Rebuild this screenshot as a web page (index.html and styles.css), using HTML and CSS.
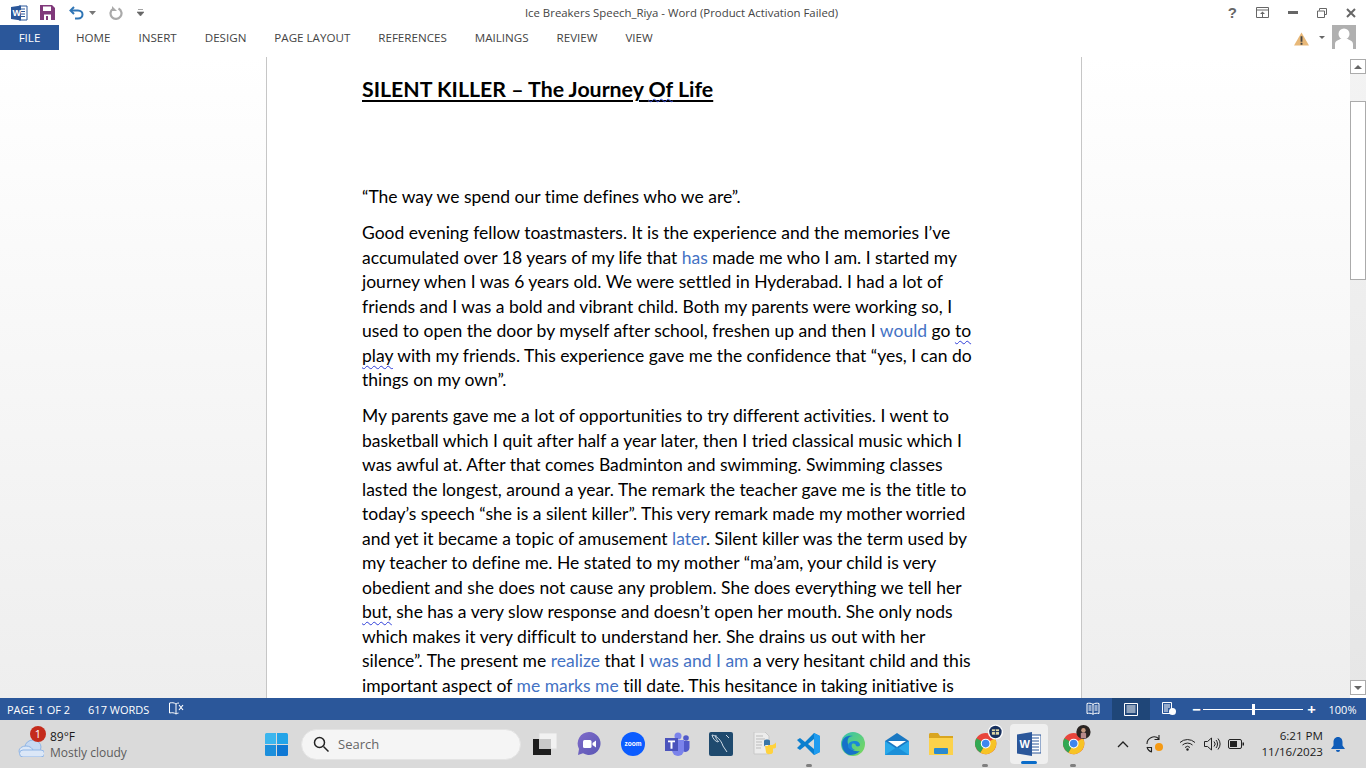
FILE: index.html
```html
<!DOCTYPE html>
<html lang="en">
<head>
  <meta charset="UTF-8" />
  <title>Ice Breakers Speech_Riya - Word</title>
  <link rel="stylesheet" href="styles.css">
</head>
<body>
  <header class="titlebar">
    <div class="qat">
      <svg class="word-mini" width="18" height="16" viewBox="0 0 18 16"><path d="M9 1h8v14H9z" fill="#fff" stroke="#2b579a"/><path d="M11 4h4M11 6.500h4M11 9h4M11 11.500h4" stroke="#2b579a"/><path d="M1 2l10-1.500v15L1 14z" fill="#2b579a"/><text x="2.500" y="11" class="word-w">W</text></svg>
      <svg class="save" width="15" height="15" viewBox="0 0 15 15"><path d="M0 0h12l3 3v12H0z" fill="#80397b"/><path d="M3 1.500h8v4.500H3z" fill="#fff"/><path d="M4 9.500h7V15H4z" fill="#fff"/><path d="M6 11h2v4H6z" fill="#80397b"/></svg>
      <svg class="undo" width="16" height="14" viewBox="0 0 16 14"><path d="M5 1L1.500 4.500 5 8" fill="none" stroke="#2f75b5" stroke-width="2"/><path d="M2 4.500h7c6 0 6 8 0 8H6" fill="none" stroke="#2f75b5" stroke-width="2"/></svg>
      <svg class="caret" width="7" height="4" viewBox="0 0 7 4"><path d="M0 0h7L3.500 4z" fill="#777"/></svg>
      <svg class="redo" width="14" height="14" viewBox="0 0 14 14"><path d="M9.500 2.500a5.500 5.500 0 1 1-5.500.3" fill="none" stroke="#aaa" stroke-width="2.200"/><path d="M3 0v5h5z" fill="#aaa"/></svg>
      <svg class="customize" width="7" height="8" viewBox="0 0 7 8"><path d="M1 .5h5M0 3h7L3.500 7z" fill="#666" stroke="#666" stroke-width=".6"/></svg>
    </div>
    <div class="doc-title">Ice Breakers Speech_Riya - Word (Product Activation Failed)</div>
    <div class="win-buttons">
      <span class="help">?</span>
      <svg width="13" height="11" viewBox="0 0 13 11"><path d="M.5.500h12v10H.5z" fill="none" stroke="#666"/><path d="M.5 3h12" stroke="#666"/><path d="M6.500 4.500L4 7h5zM6 7h1v3H6z" fill="#666"/></svg>
      <svg width="10" height="3" viewBox="0 0 10 3"><path d="M0 0h10v3H0z" fill="#666"/></svg>
      <svg width="10" height="10" viewBox="0 0 10 10"><path d="M2.500 2.500V.5h7v6h-2M.5 3h7v6.500h-7z" fill="none" stroke="#666"/></svg>
      <svg width="10" height="10" viewBox="0 0 10 10"><path d="M1 1l8 8M9 1L1 9" stroke="#666" stroke-width="2"/></svg>
    </div>
  </header>

  <nav class="ribbon">
    <a class="tab-file">FILE</a>
    <div class="tabs">
      <a class="tab">HOME</a>
      <a class="tab">INSERT</a>
      <a class="tab">DESIGN</a>
      <a class="tab">PAGE LAYOUT</a>
      <a class="tab">REFERENCES</a>
      <a class="tab">MAILINGS</a>
      <a class="tab">REVIEW</a>
      <a class="tab">VIEW</a>
    </div>
    <div class="account">
      <svg class="warn" width="15" height="14" viewBox="0 0 16 14"><path d="M8 0l8 14H0z" fill="#e8b878"/><path d="M7 4h2v6H7zM7 11h2v2H7z" fill="#444"/></svg>
      <svg class="acct-caret" width="6" height="3" viewBox="0 0 6 3"><path d="M0 0h6L3 3z" fill="#666"/></svg>
      <svg class="avatar" width="24" height="24" viewBox="0 0 24 24"><path d="M0 0h24v24H0z" fill="#b0b0b0"/><circle cx="12" cy="9" r="5.500" fill="#fff"/><path d="M3 24v-5c0-4 5-4 5-5h8c0 1 5 1 5 5v5z" fill="#fff"/></svg>
    </div>
  </nav>

  <main class="workspace">
    <div class="canvas">
      <article class="page">
        <h1 class="heading"><span class="heading-u">SILENT KILLER – The Journey <span class="squig-title">Of</span> Life</span></h1>
        <p class="para quote"><span class="line">“The way we spend our time defines who we are”.</span></p>
        <p class="para">
          <span class="line">Good evening fellow toastmasters. It is the experience and the memories I’ve</span>
          <span class="line">accumulated over 18 years of my life that <b class="edit">has</b> made me who I am. I started my</span>
          <span class="line">journey when I was 6 years old. We were settled in Hyderabad. I had a lot of</span>
          <span class="line">friends and I was a bold and vibrant child. Both my parents were working so, I</span>
          <span class="line">used to open the door by myself after school, freshen up and then I <b class="edit">would</b> go <span class="squig">to</span></span>
          <span class="line"><span class="squig">play</span> with my friends. This experience gave me the confidence that “yes, I can do</span>
          <span class="line">things on my own”.</span>
        </p>
        <p class="para">
          <span class="line">My parents gave me a lot of opportunities to try different activities. I went to</span>
          <span class="line">basketball which I quit after half a year later, then I tried classical music which I</span>
          <span class="line">was awful at. After that comes Badminton and swimming. Swimming classes</span>
          <span class="line">lasted the longest, around a year. The remark the teacher gave me is the title to</span>
          <span class="line">today’s speech “she is a silent killer”. This very remark made my mother worried</span>
          <span class="line">and yet it became a topic of amusement <b class="edit">later</b>. Silent killer was the term used by</span>
          <span class="line">my teacher to define me. He stated to my mother “ma’am, your child is very</span>
          <span class="line">obedient and she does not cause any problem. She does everything we tell her</span>
          <span class="line"><span class="squig">but,</span> she has a very slow response and doesn’t open her mouth. She only nods</span>
          <span class="line">which makes it very difficult to understand her. She drains us out with her</span>
          <span class="line">silence”. The present me <b class="edit">realize</b> that I <b class="edit">was and I am</b> a very hesitant child and this</span>
          <span class="line">important aspect of <b class="edit">me marks me</b> till date. This hesitance in taking initiative is</span>
        </p>
      </article>
    </div>
    <aside class="scrollbar">
      <div class="sb-btn"><svg width="8" height="4" viewBox="0 0 8 4"><path d="M4 0l4 4H0z" fill="#666"/></svg></div>
      <div class="sb-track"><div class="sb-thumb"></div></div>
      <div class="sb-btn"><svg width="8" height="4" viewBox="0 0 8 4"><path d="M0 0h8L4 4z" fill="#666"/></svg></div>
    </aside>
  </main>

  <footer class="statusbar">
    <span class="st-item st-page">PAGE 1 OF 2</span>
    <span class="st-item st-words">617 WORDS</span>
    <svg class="st-book" width="15" height="14" viewBox="0 0 15 14"><path d="M7 2C5 .5 3 .5 .5 1v10c2.500-.5 4.500-.5 6.500 1V2zM7 2c1-.8 2-1 3-1M7 12c1-.5 1.500-.8 2.500-.9" fill="none" stroke="#fff"/><path d="M10 3l4 5M14 3l-4 5" stroke="#fff" stroke-width="1.200"/></svg>
    <div class="st-right">
      <div class="view-btn">
        <svg width="14" height="14" viewBox="0 0 14 14"><path d="M1 1.500c2-.5 4-.5 6 .8 2-1.300 4-1.300 6-.8v10c-2-.5-4-.5-6 .8-2-1.300-4-1.300-6-.8z" fill="none" stroke="#fff"/><path d="M7 2v10M2.500 4h3M2.500 6h3M2.500 8h3M8.500 4h3M8.500 6h3M8.500 8h3" stroke="#fff"/></svg>
      </div>
      <div class="view-btn view-on">
        <svg width="14" height="13" viewBox="0 0 14 13"><path d="M.5.500h13v12H.5z" fill="none" stroke="#fff"/><path d="M2.500 3h9M2.500 5h9M2.500 7h9M2.500 9h9" stroke="#fff"/></svg>
      </div>
      <div class="view-btn">
        <svg width="15" height="14" viewBox="0 0 15 14"><path d="M.5.500h9v11H.5z" fill="none" stroke="#fff"/><path d="M2 3h6M2 5h6M2 7h4M2 9h4" stroke="#fff"/><circle cx="10.500" cy="9.500" r="3.500" fill="#fff"/></svg>
      </div>
      <div class="zoom">
        <span class="z-sign">−</span>
        <div class="z-track"><span class="z-knob"></span></div>
        <span class="z-sign">+</span>
      </div>
      <span class="z-pct">100%</span>
    </div>
  </footer>

  <div class="taskbar">
    <div class="weather">
      <div class="w-icon">
        <svg width="26" height="19" viewBox="0 0 26 19"><ellipse cx="15" cy="9" rx="8" ry="7" fill="#c6d9f2" stroke="#8fb5e6"/><ellipse cx="8" cy="13" rx="7" ry="5" fill="#dbe7f7" stroke="#8fb5e6"/><path d="M6 12h17a3.500 3.500 0 0 1 0 7H5a3.500 3.500 0 0 1 0-7z" fill="#dbe7f7" stroke="#8fb5e6"/></svg>
        <span class="badge">1</span>
      </div>
      <div class="w-text"><div class="w-temp">89°F</div><div class="w-desc">Mostly cloudy</div></div>
    </div>

    <div class="tb-center">
      <svg class="winlogo" width="23" height="23" viewBox="0 0 23 23"><path d="M0 1.500A1.500 1.500 0 0 1 1.500 0H11v11H0z" fill="#3cb6ee"/><path d="M12 0h9.500A1.500 1.500 0 0 1 23 1.500V11H12z" fill="#24a4e8"/><path d="M0 12h11v11H1.500A1.500 1.500 0 0 1 0 21.500z" fill="#1c8fdc"/><path d="M12 12h11v9.500a1.500 1.500 0 0 1-1.500 1.500H12z" fill="#0f78d4"/></svg>
      <div class="search">
        <svg width="16" height="16" viewBox="0 0 16 16"><circle cx="6.500" cy="6.500" r="5" fill="none" stroke="#222" stroke-width="1.500"/><path d="M10.500 10.500l5 5" stroke="#222" stroke-width="1.500"/></svg>
        <span>Search</span>
      </div>
      <div class="tb-icon"><svg width="24" height="22" viewBox="0 0 24 22"><path d="M6 0h18v16H6z" fill="#f2f2f2"/><path d="M6 0h18v16H6z" fill="none" stroke="#ddd"/><path d="M0 6h18v16H0z" fill="#1d1d1d"/><path d="M6 6h12v10H6z" fill="#c9c9c9"/></svg></div>
      <div class="tb-icon"><svg width="24" height="24" viewBox="0 0 24 24"><defs><linearGradient id="zc" x1="0" y1="0" x2="1" y2="1"><stop offset="0" stop-color="#7f6bc9"/><stop offset="1" stop-color="#5a57b5"/></linearGradient></defs><path d="M12 0a11.500 11.500 0 1 1-6 21.300L1 23l1-6A11.500 11.500 0 0 1 12 0z" fill="url(#zc)"/><rect x="6" y="8" width="8.500" height="8" rx="1.500" fill="#fff"/><path d="M15.500 11l3.500-2.500v7L15.500 13z" fill="#fff"/></svg></div>
      <div class="tb-icon"><svg width="24" height="24" viewBox="0 0 24 24"><circle cx="12" cy="12" r="12" fill="#0b5cff"/><text x="12" y="14" class="zoom-word">zoom</text></svg></div>
      <div class="tb-icon"><svg width="25" height="24" viewBox="0 0 25 24"><circle cx="13" cy="4" r="3.500" fill="#7b83eb"/><circle cx="21" cy="6" r="2.800" fill="#5059c9"/><path d="M18 9h6.500v7a4 4 0 0 1-6.500 3z" fill="#5059c9"/><path d="M7 8h12v10a6 6 0 0 1-12 0z" fill="#7b83eb"/><rect x="0" y="6" width="13" height="13" fill="#4b53bc"/><path d="M3 8.500h7v1.800H7.500v6.500h-2v-6.500H3z" fill="#fff"/></svg></div>
      <div class="tb-icon"><svg width="24" height="24" viewBox="0 0 24 24"><rect width="24" height="24" rx="2" fill="#1f4a6e"/><path d="M3 3c5 1 9 5 11 11l4 6M7 3c-1 3 1 5 3 7M3 3c1 4 3 6 6 7M17 3l3 3" fill="none" stroke="#cfdbe6" stroke-width="1"/></svg></div>
      <div class="tb-icon"><svg width="24" height="24" viewBox="0 0 24 24"><path d="M1 0h11l4 4v18H1z" fill="#ececec" stroke="#c8c8c8"/><path d="M3 4h7M3 7h9M3 10h6M3 13h6M3 16h5" stroke="#bbb"/><path d="M11 9c0-2 6-2 6 0v4h-4c-1 0-2 1-2 2z" fill="#3a76a8"/><path d="M23 15c0 2-6 2-6 0v-1h-2v-1h4c1 0 4-2 4-3z" fill="#ffd23e"/><path d="M12 14h8v6c0 3-7 3-7 0z" fill="#ffd23e"/></svg></div>
      <div class="tb-icon tb-run"><svg width="24" height="24" viewBox="0 0 24 24"><path d="M17 1l6 3v16l-6 3-9-9-5 4-3-2 4-4-4-4 3-2 5 4z" fill="#0a7fcf"/><path d="M17 1l6 3v16l-6 3z" fill="#1f9cf0"/><path d="M17 7l-6 5 6 5z" fill="#d9d9d9"/></svg></div>
      <div class="tb-icon"><svg width="24" height="24" viewBox="0 0 24 24"><defs><linearGradient id="eg" x1="0" y1="0" x2="1" y2="1"><stop offset="0" stop-color="#35c1b0"/><stop offset="1" stop-color="#7ed957"/></linearGradient></defs><circle cx="12" cy="12" r="12" fill="url(#eg)"/><path d="M1 12C1 5 7 3 12 4c-5 0-6 4-5 8 1 5 6 8 12 7-3 3-7 4-10 4-5-1-8-6-8-11z" fill="#1672c9"/><path d="M7 14c0-4 4-5 7-5s5 2 5 4c0 1-2 2-4 1 0-2-2-3-4-2-1 2 0 5 3 6-4 0-7-1-7-4z" fill="#1a86d8"/></svg></div>
      <div class="tb-icon"><svg width="24" height="22" viewBox="0 0 24 22"><path d="M0 8L12 0l12 8v14H0z" fill="#1a78c2"/><path d="M3 8h18l-9 6z" fill="#fff"/><path d="M0 8l12 8 12-8v14H0z" fill="#29a8ea"/><path d="M0 22l12-8 12 8z" fill="#1b8fd8"/></svg></div>
      <div class="tb-icon"><svg width="24" height="22" viewBox="0 0 24 22"><path d="M0 1.500C0 .7.700 0 1.500 0H9l2 3h13v3H0z" fill="#d9a520"/><path d="M0 5h24v17H0z" fill="#fcd24b"/><rect x="5" y="15" width="14" height="6" rx="1" fill="#2a8ad0"/></svg></div>
      <div class="tb-icon tb-run"><svg width="36" height="36" viewBox="0 0 36 36" class="chrome-svg"><circle cx="12" cy="22" r="12" fill="#e8453c"/><path d="M12 22L22.400 16A12 12 0 0 1 6 32.400z" fill="#f7c325"/><path d="M12 22L6 32.400A12 12 0 0 1 1.600 16z" fill="#33a853"/><circle cx="12" cy="22" r="5.500" fill="#fff"/><circle cx="12" cy="22" r="4.300" fill="#3f86ee"/><circle cx="23" cy="9" r="8.500" fill="#fff"/><circle cx="23" cy="9" r="7" fill="#17305e"/><rect x="19" y="6" width="8" height="6" fill="#e1d9a8"/><path d="M19 8.500h8M23 6v6" stroke="#17305e"/></svg></div>
      <div class="tb-icon tb-word">
        <svg width="24" height="24" viewBox="0 0 24 24"><path d="M14 3h10v18H14z" fill="#fff" stroke="#2b579a"/><path d="M15 6h7M15 9h7M15 12h7M15 15h7M15 18h7" stroke="#2b579a"/><path d="M0 2.500L15 0v24L0 21.500z" fill="#2b579a"/><text x="2.500" y="16" class="word-big">W</text></svg>
        <span class="tb-active"></span>
      </div>
      <div class="tb-icon tb-run"><svg width="36" height="36" viewBox="0 0 36 36" class="chrome-svg"><circle cx="12" cy="22" r="12" fill="#e8453c"/><path d="M12 22L22.400 16A12 12 0 0 1 6 32.400z" fill="#f7c325"/><path d="M12 22L6 32.400A12 12 0 0 1 1.600 16z" fill="#33a853"/><circle cx="12" cy="22" r="5.500" fill="#fff"/><circle cx="12" cy="22" r="4.300" fill="#3f86ee"/><circle cx="23" cy="9" r="8" fill="#2a2422"/><path d="M20 16v-5c0-2 6-2 6 0v5z" fill="#b98a8a"/><circle cx="23" cy="7" r="2.500" fill="#c79a80"/></svg></div>
    </div>

    <div class="tray">
      <svg class="tray-chev" width="12" height="7" viewBox="0 0 12 7"><path d="M1 6l5-5 5 5" fill="none" stroke="#222" stroke-width="1.300"/></svg>
      <svg class="tray-sync" width="20" height="19" viewBox="0 0 20 19"><path d="M1 9a7 7 0 0 1 12-5M13 0v4.500H8.500M6 17a7 7 0 0 1-5-5M1 12.500h4.500V17" fill="none" stroke="#222" stroke-width="1.100"/><circle cx="13" cy="12" r="4" fill="#f59a13"/></svg>
      <svg class="tray-wifi" width="17" height="13" viewBox="0 0 17 13"><path d="M1 4.500a11 11 0 0 1 15 0M3.500 7a7.500 7.500 0 0 1 10 0M6 9.500a3.500 3.500 0 0 1 5 0" fill="none" stroke="#222"/><circle cx="8.500" cy="11.500" r="1.200" fill="#222"/></svg>
      <svg class="tray-vol" width="17" height="14" viewBox="0 0 17 14"><path d="M.5 4.500h3L7.500 1v12L3.500 9.500h-3z" fill="none" stroke="#222"/><path d="M10 4.500a3.500 3.500 0 0 1 0 5M12 3a6 6 0 0 1 0 8M14 1.500a9 9 0 0 1 0 11" fill="none" stroke="#222"/></svg>
      <svg class="tray-bat" width="16" height="10" viewBox="0 0 16 10"><rect x=".5" y=".5" width="13" height="9" rx="1.500" fill="none" stroke="#222"/><rect x="2" y="2" width="7" height="6" fill="#222"/><path d="M14.500 3.500h1.500v3h-1.500z" fill="#222"/></svg>
      <div class="clock"><div>6:21 PM</div><div>11/16/2023</div></div>
      <svg class="tray-bell" width="14" height="15" viewBox="0 0 14 15"><path d="M7 0c3 0 4.500 2.500 4.500 5v3.500L14 12H0l2.500-3.500V5C2.500 2.500 4 0 7 0z" fill="#0f5cb8"/><path d="M5 13h4a2 2 0 0 1-4 0z" fill="#0f5cb8"/></svg>
    </div>
  </div>
</body>
</html>
```

FILE: styles.css
```css
* { box-sizing: border-box; }

html, body {
  margin: 0;
  height: 100%;
  overflow: hidden;
}

body {
  width: 1366px;
  height: 768px;
  display: flex;
  flex-direction: column;
  background: #fff;
  font-family: "Open Sans", "Liberation Sans", sans-serif;
  color: #444;
}

/* title bar */
.titlebar {
  height: 25px;
  display: flex;
  align-items: center;
  justify-content: space-between;
  padding: 0 10px;
  position: relative;
}

.qat {
  display: flex;
  align-items: center;
}

.save { margin-left: 12px; }
.undo { margin-left: 14px; }
.caret { margin-left: 4px; }
.redo { margin-left: 13px; }
.customize { margin-left: 14px; }

.word-w {
  font: bold 9px "Liberation Sans", sans-serif;
  fill: #fff;
}

.word-big {
  font: bold 11px "Liberation Sans", sans-serif;
  fill: #fff;
}

.doc-title {
  position: absolute;
  left: 0;
  right: 3px;
  text-align: center;
  font-size: 11.400px;
  color: #444;
  pointer-events: none;
}

.win-buttons {
  display: flex;
  align-items: center;
  gap: 19px;
}

.help {
  font: bold 15px "Liberation Sans", sans-serif;
  color: #666;
}

/* ribbon tabs */
.ribbon {
  height: 25px;
  display: flex;
  align-items: stretch;
  font-size: 11.600px;
  color: #444;
}

.tab-file {
  width: 59px;
  background: #2b579a;
  color: #fff;
  display: flex;
  align-items: center;
  justify-content: center;
}

.tabs {
  display: flex;
  padding-left: 3px;
}

.tab {
  padding: 0 14px;
  display: flex;
  align-items: center;
}

.account {
  margin-left: auto;
  display: flex;
  align-items: center;
  padding-right: 10px;
}

.warn { margin-top: 2px; }
.acct-caret { margin: 0 7px 0 10px; }
.avatar { align-self: flex-start; }

/* document */
.workspace {
  height: 648px;
  display: flex;
}

.canvas {
  flex: 1;
  overflow: hidden;
  padding-top: 7px;
  display: flex;
  justify-content: center;
  background: linear-gradient(to bottom, #fff 1%, #eee 100%);
}

.page {
  width: 816px;
  height: 660px;
  flex: none;
  margin-left: -2px;
  background: #fff;
  border-left: 1px solid #c6c6c6;
  border-right: 1px solid #c6c6c6;
  padding: 18px 95px 0;
  font-family: Lato, "Liberation Sans", sans-serif;
  font-size: 17.500px;
  font-variant-ligatures: none;
  color: #000;
}

.heading {
  margin: 0 0 81px;
  font-size: 21.300px;
  font-weight: bold;
  line-height: 29px;
}

.heading-u {
  text-decoration: underline 2px #000;
  text-underline-offset: 3px;
}

.squig-title {
  text-decoration: underline wavy #3a4fd8 1px;
  text-underline-offset: 1px;
}

.para {
  margin: 0 0 11.500px;
}

.line {
  display: block;
  white-space: nowrap;
  line-height: 24.500px;
}

.edit {
  font-weight: normal;
  color: #4472c4;
}

.squig {
  text-decoration: underline wavy #2f3fd8 1px;
  text-underline-offset: 3px;
}

/* scrollbar */
.scrollbar {
  width: 16px;
  display: flex;
  flex-direction: column;
  padding-top: 9px;
  padding-bottom: 3px;
  background: linear-gradient(#f3f3f3, #e6e6e6) 0 9px / 100% 636px no-repeat #fff;
}

.sb-btn {
  height: 15px;
  background: #fff;
  border: 1px solid #ababab;
  display: flex;
  align-items: center;
  justify-content: center;
}

.sb-track {
  flex: 1;
  padding-top: 27px;
}

.sb-thumb {
  height: 179px;
  background: #fff;
  border: 1px solid #ababab;
}

/* status bar */
.statusbar {
  height: 22px;
  background: #2b579a;
  color: #fff;
  font-size: 11px;
  display: flex;
  align-items: center;
}

.st-page { margin-left: 7px; }
.st-words { margin-left: 18px; }
.st-book { margin-left: 20px; }

.st-right {
  margin-left: auto;
  display: flex;
  align-items: center;
  height: 100%;
}

.view-btn {
  width: 38px;
  height: 100%;
  display: flex;
  align-items: center;
  justify-content: center;
}

.view-on { background: #1f4678; }

.zoom {
  display: flex;
  align-items: center;
  margin-left: 3px;
}

.z-sign {
  font-size: 15px;
  font-weight: bold;
  width: 11px;
  text-align: center;
  line-height: 1;
}

.z-track {
  width: 100px;
  height: 1px;
  margin: 0 3px 0 1px;
  background: #fff;
  display: flex;
  align-items: center;
  justify-content: center;
}

.z-knob {
  width: 3px;
  height: 11px;
  flex: none;
  background: #fff;
}

.z-pct {
  width: 47px;
  text-align: center;
  margin-left: 2px;
}

/* taskbar */
.taskbar {
  height: 48px;
  flex: none;
  background: #dadada;
  display: flex;
  align-items: center;
  position: relative;
  color: #1a1a1a;
}

.weather {
  display: flex;
  align-items: center;
  margin-left: 18px;
  width: 247px;
}

.w-icon {
  width: 32px;
  height: 32px;
  position: relative;
  display: flex;
  align-items: flex-end;
  padding-bottom: 3px;
}

.badge {
  position: absolute;
  left: 12px;
  top: -2px;
  width: 16px;
  height: 16px;
  border-radius: 50%;
  background: #c42b1c;
  color: #fff;
  font-size: 11px;
  text-align: center;
  line-height: 16px;
}

.w-text {
  font-size: 12px;
  line-height: 16px;
  padding-top: 2px;
}

.w-desc { color: #5c5c5c; }

.tb-center {
  display: flex;
  align-items: center;
}

.winlogo { margin-right: 13px; }

.search {
  width: 220px;
  height: 31px;
  border-radius: 16px;
  background: #f5f5f5;
  border: 1px solid #e4e4e4;
  display: flex;
  align-items: center;
  gap: 9px;
  padding-left: 11px;
  font-size: 13px;
  color: #666;
  margin-right: 2px;
}

.tb-icon {
  width: 44px;
  height: 40px;
  display: flex;
  align-items: center;
  justify-content: center;
  position: relative;
}

.tb-run::after {
  content: "";
  position: absolute;
  left: 19px;
  bottom: -3px;
  width: 6px;
  height: 3px;
  border-radius: 2px;
  background: #7f7f7f;
}

.tb-word {
  background: #efefef;
  border-radius: 4px;
  width: 38px;
  margin: 0 3px;
}

.tb-active {
  position: absolute;
  left: 11px;
  bottom: 0;
  width: 16px;
  height: 3px;
  border-radius: 2px;
  background: #0a6cc9;
}

.chrome-svg { margin: -8px 0 0 12px; }

.zoom-word {
  font: bold 6.500px "Liberation Sans", sans-serif;
  fill: #fff;
  text-anchor: middle;
}

.tray {
  position: absolute;
  right: 0;
  top: 0;
  height: 48px;
  display: flex;
  align-items: center;
  padding-right: 21px;
}

.tray-sync { margin-left: 17px; }
.tray-wifi { margin-left: 13px; }
.tray-vol { margin-left: 8px; }
.tray-bat { margin-left: 7px; }

.clock {
  margin-left: 17px;
  text-align: right;
  font-size: 11.600px;
  line-height: 16px;
}

.tray-bell { margin-left: 8px; }
```
